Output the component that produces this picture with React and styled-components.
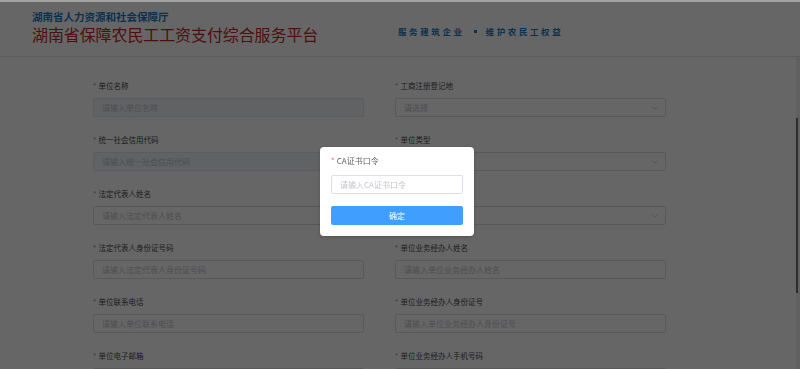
import React from 'react';
import styled, { createGlobalStyle } from 'styled-components';

const GlobalStyle = createGlobalStyle`
  html, body {
    margin: 0;
    padding: 0;
    background: #ffffff;
    font-family: "Noto Sans CJK SC", "Noto Sans", sans-serif;
  }
  * { box-sizing: border-box; }
`;

const Page = styled.div`
  width: 800px;
  height: 369px;
  overflow: hidden;
  display: flex;
  flex-direction: column;
`;

const TopStrip = styled.div`
  height: 2px;
  background: #a2a2a2;
  flex-shrink: 0;
`;

const Header = styled.header`
  height: 55px;
  flex-shrink: 0;
  display: flex;
  align-items: center;
  padding-left: 32px;
  border-bottom: 1px solid #e6e6e6;
`;

const Brand = styled.div`
  display: flex;
  flex-direction: column;
  width: 366px;
`;

const Dept = styled.div`
  font-size: 10.5px;
  font-weight: 700;
  line-height: 14px;
  color: #1f7cc4;
  margin-top: -4px;
`;

const Platform = styled.div`
  font-size: 16px;
  line-height: 20px;
  letter-spacing: -0.1px;
  color: #c0282c;
`;

const Slogan = styled.div`
  font-size: 8.5px;
  font-weight: 700;
  letter-spacing: 2.6px;
  color: #1f7cc4;
  margin-top: 4px;
  display: flex;
  align-items: center;
  gap: 9px;
`;

const Dot = styled.span`
  width: 3px;
  height: 3px;
  background: #1f7cc4;
`;

const Body = styled.main`
  flex: 1;
  display: flex;
  border-right: 2px solid #efefef;
`;

const Form = styled.div`
  flex: 1;
  display: grid;
  grid-template-columns: 271px 271px;
  column-gap: 31px;
  row-gap: 17px;
  padding: 23px 0 0 93px;
  align-content: start;
`;

const Field = styled.div`
  display: flex;
  flex-direction: column;
`;

const Label = styled.div`
  height: 12px;
  line-height: 12px;
  font-size: 7.5px;
  color: #4a4c50;
  margin-bottom: 6px;
`;

const Star = styled.span`
  color: #f56c6c;
  margin-right: 2px;
`;

const InputBox = styled.div`
  height: 19px;
  border: 1px solid ${(p) => (p.disabled ? '#e4e7ed' : '#dcdfe6')};
  background: ${(p) => (p.disabled ? '#f2f5fa' : '#ffffff')};
  border-radius: 2px;
  display: flex;
  align-items: center;
  justify-content: space-between;
  padding: 0 7px 0 8px;
  font-size: 8px;
  color: #c0c4cc;
`;

const Chevron = () => (
  <svg width="6" height="4" viewBox="0 0 6 4">
    <path d="M0.5 0.8 L3 3.2 L5.5 0.8" fill="none" stroke="#c0c4cc" strokeWidth="0.8" />
  </svg>
);

const ScrollTrack = styled.div`
  width: 2px;
  background: #f2f2f2;
  display: flex;
  flex-direction: column;
  padding-top: 61px;
`;

const ScrollThumb = styled.div`
  height: 175px;
  background: #6e6e6e;
`;

const Mask = styled.div`
  position: fixed;
  top: 2px;
  left: 0;
  right: 0;
  bottom: 0;
  background: rgba(0, 0, 0, 0.6);
  display: flex;
  justify-content: center;
  align-items: flex-start;
  padding: 145px 6px 0 0;
`;

const Dialog = styled.div`
  width: 154px;
  background: #ffffff;
  border-radius: 4px;
  padding: 8px 11px 11px;
  display: flex;
  flex-direction: column;
  box-shadow: 0 1px 4px rgba(0, 0, 0, 0.2);
`;

const DialogLabel = styled.div`
  height: 12px;
  line-height: 12px;
  font-size: 8px;
  color: #606266;
  margin-bottom: 8px;
`;

const DialogInput = styled.div`
  height: 19px;
  border: 1px solid #dcdfe6;
  border-radius: 2px;
  font-size: 8px;
  color: #c0c4cc;
  display: flex;
  align-items: center;
  padding-left: 8px;
  margin-bottom: 12px;
`;

const PrimaryButton = styled.div`
  height: 19px;
  border-radius: 2px;
  background: #409eff;
  color: #ffffff;
  font-size: 8px;
  display: flex;
  align-items: center;
  justify-content: center;
`;

const fields = [
  { label: '单位名称', placeholder: '请输入单位名称', disabled: true },
  { label: '工商注册登记地', placeholder: '请选择', select: true },
  { label: '统一社会信用代码', placeholder: '请输入统一社会信用代码', disabled: true },
  { label: '单位类型', placeholder: '请选择', select: true },
  { label: '法定代表人姓名', placeholder: '请输入法定代表人姓名' },
  { label: '所属行业', placeholder: '请选择', select: true },
  { label: '法定代表人身份证号码', placeholder: '请输入法定代表人身份证号码' },
  { label: '单位业务经办人姓名', placeholder: '请输入单位业务经办人姓名' },
  { label: '单位联系电话', placeholder: '请输入单位联系电话' },
  { label: '单位业务经办人身份证号', placeholder: '请输入单位业务经办人身份证号' },
  { label: '单位电子邮箱', placeholder: '请输入单位电子邮箱' },
  { label: '单位业务经办人手机号码', placeholder: '请输入单位业务经办人手机号码' },
];

export default function App() {
  return (
    <>
      <GlobalStyle />
      <Page>
        <TopStrip />
        <Header>
          <Brand>
            <Dept>湖南省人力资源和社会保障厅</Dept>
            <Platform>湖南省保障农民工工资支付综合服务平台</Platform>
          </Brand>
          <Slogan>
            <span>服务建筑企业</span>
            <Dot />
            <span>维护农民工权益</span>
          </Slogan>
        </Header>
        <Body>
          <Form>
            {fields.map((f) => (
              <Field key={f.label}>
                <Label>
                  <Star>*</Star>
                  {f.label}
                </Label>
                <InputBox disabled={f.disabled}>
                  <span>{f.placeholder}</span>
                  {f.select && <Chevron />}
                </InputBox>
              </Field>
            ))}
          </Form>
          <ScrollTrack>
            <ScrollThumb />
          </ScrollTrack>
        </Body>
      </Page>
      <Mask>
        <Dialog>
          <DialogLabel>
            <Star>*</Star>
            CA证书口令
          </DialogLabel>
          <DialogInput>请输入CA证书口令</DialogInput>
          <PrimaryButton>确定</PrimaryButton>
        </Dialog>
      </Mask>
    </>
  );
}
